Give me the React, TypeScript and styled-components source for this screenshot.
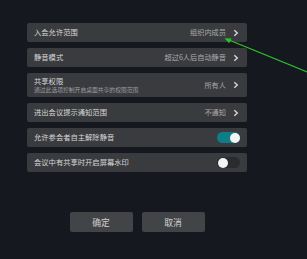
import React, { useState } from "react";
import styled, { createGlobalStyle } from "styled-components";

const Global = createGlobalStyle`
  html, body { margin: 0; padding: 0; background: #16181f; }
  body { font-family: "Noto Sans CJK SC", "Noto Sans", sans-serif; width: 307px; height: 259px; overflow: hidden; }
`;

const Page = styled.div`
  position: relative;
  width: 307px;
  height: 259px;
  background: #16181f;
  padding: 23px 0 0 27px;
  box-sizing: border-box;
`;

const Panel = styled.div`
  width: 220px;
  display: flex;
  flex-direction: column;
  gap: 6px;
`;

const Row = styled.div<{ $tall?: boolean }>`
  height: ${(p) => (p.$tall ? 24 : 19)}px;
  background: #3a3b3f;
  border-radius: 2px;
  display: flex;
  align-items: center;
  padding: 0 7px 0 7px;
  box-sizing: border-box;
`;

const LabelCol = styled.div`
  flex: 1;
  display: flex;
  flex-direction: column;
  justify-content: center;
  gap: 1px;
`;

const Label = styled.div`
  color: #d6d6d8;
  font-size: 7.3px;
  line-height: 9px;
  white-space: nowrap;
`;

const Sub = styled.div`
  color: #9c9da2;
  font-size: 5.8px;
  line-height: 6px;
  white-space: nowrap;
`;

const Value = styled.div`
  color: #a9aaae;
  font-size: 7.2px;
  line-height: 9px;
  margin-right: 7px;
  white-space: nowrap;
`;

const Chevron = styled.svg`
  width: 6px;
  height: 8px;
  flex: none;
  margin-right: 1px;
`;

const Track = styled.div<{ $on: boolean }>`
  width: 23px;
  height: 11px;
  border-radius: 6px;
  background: ${(p) => (p.$on ? "#0f7d88" : "#2a2b2f")};
  position: relative;
  flex: none;
  cursor: pointer;
`;

const Knob = styled.div<{ $on: boolean }>`
  position: absolute;
  top: 0.5px;
  ${(p) => (p.$on ? "right: 0.5px;" : "left: 0.5px;")}
  width: 10px;
  height: 10px;
  border-radius: 50%;
  background: #f4f4f4;
`;

const Buttons = styled.div`
  display: flex;
  justify-content: center;
  gap: 9px;
  margin-top: 40px;
  width: 220px;
`;

const Button = styled.button`
  width: 63px;
  height: 20px;
  background: #434448;
  border: none;
  border-radius: 2px;
  color: #d0d0d2;
  font-family: "Noto Sans CJK SC", "Noto Sans", sans-serif;
  font-size: 8.8px;
  padding: 0;
  cursor: pointer;
`;

const ArrowSvg = styled.svg`
  position: absolute;
  left: 0;
  top: 0;
  pointer-events: none;
`;

const ChevronIcon = () => (
  <Chevron viewBox="0 0 6 8">
    <path d="M1.3 1.2 L4.3 4 L1.3 6.8" stroke="#d6d6d8" strokeWidth="1.4" fill="none" />
  </Chevron>
);

const Toggle = ({ initial }: { initial: boolean }) => {
  const [on, setOn] = useState(initial);
  return (
    <Track $on={on} onClick={() => setOn(!on)}>
      <Knob $on={on} />
    </Track>
  );
};

export default function App() {
  return (
    <Page>
      <Global />
      <Panel>
        <Row>
          <LabelCol><Label>入会允许范围</Label></LabelCol>
          <Value>组织内成员</Value>
          <ChevronIcon />
        </Row>
        <Row>
          <LabelCol><Label>静音模式</Label></LabelCol>
          <Value>超过6人后自动静音</Value>
          <ChevronIcon />
        </Row>
        <Row $tall>
          <LabelCol>
            <Label>共享权限</Label>
            <Sub>通过此选项控制开启桌面共享的权限范围</Sub>
          </LabelCol>
          <Value>所有人</Value>
          <ChevronIcon />
        </Row>
        <Row>
          <LabelCol><Label>进出会议提示通知范围</Label></LabelCol>
          <Value>不通知</Value>
          <ChevronIcon />
        </Row>
        <Row>
          <LabelCol><Label>允许参会者自主解除静音</Label></LabelCol>
          <Toggle initial={true} />
        </Row>
        <Row>
          <LabelCol><Label>会议中有共享时开启屏幕水印</Label></LabelCol>
          <Toggle initial={false} />
        </Row>
      </Panel>
      <Buttons>
        <Button>确定</Button>
        <Button>取消</Button>
      </Buttons>
      <ArrowSvg width="307" height="259" viewBox="0 0 307 259">
        <line x1="229" y1="40" x2="310" y2="73" stroke="#2bc52b" strokeWidth="1.2" />
        <polygon points="224.5,38.3 231.5,38.6 229.2,43.2" fill="#2bc52b" />
      </ArrowSvg>
    </Page>
  );
}
